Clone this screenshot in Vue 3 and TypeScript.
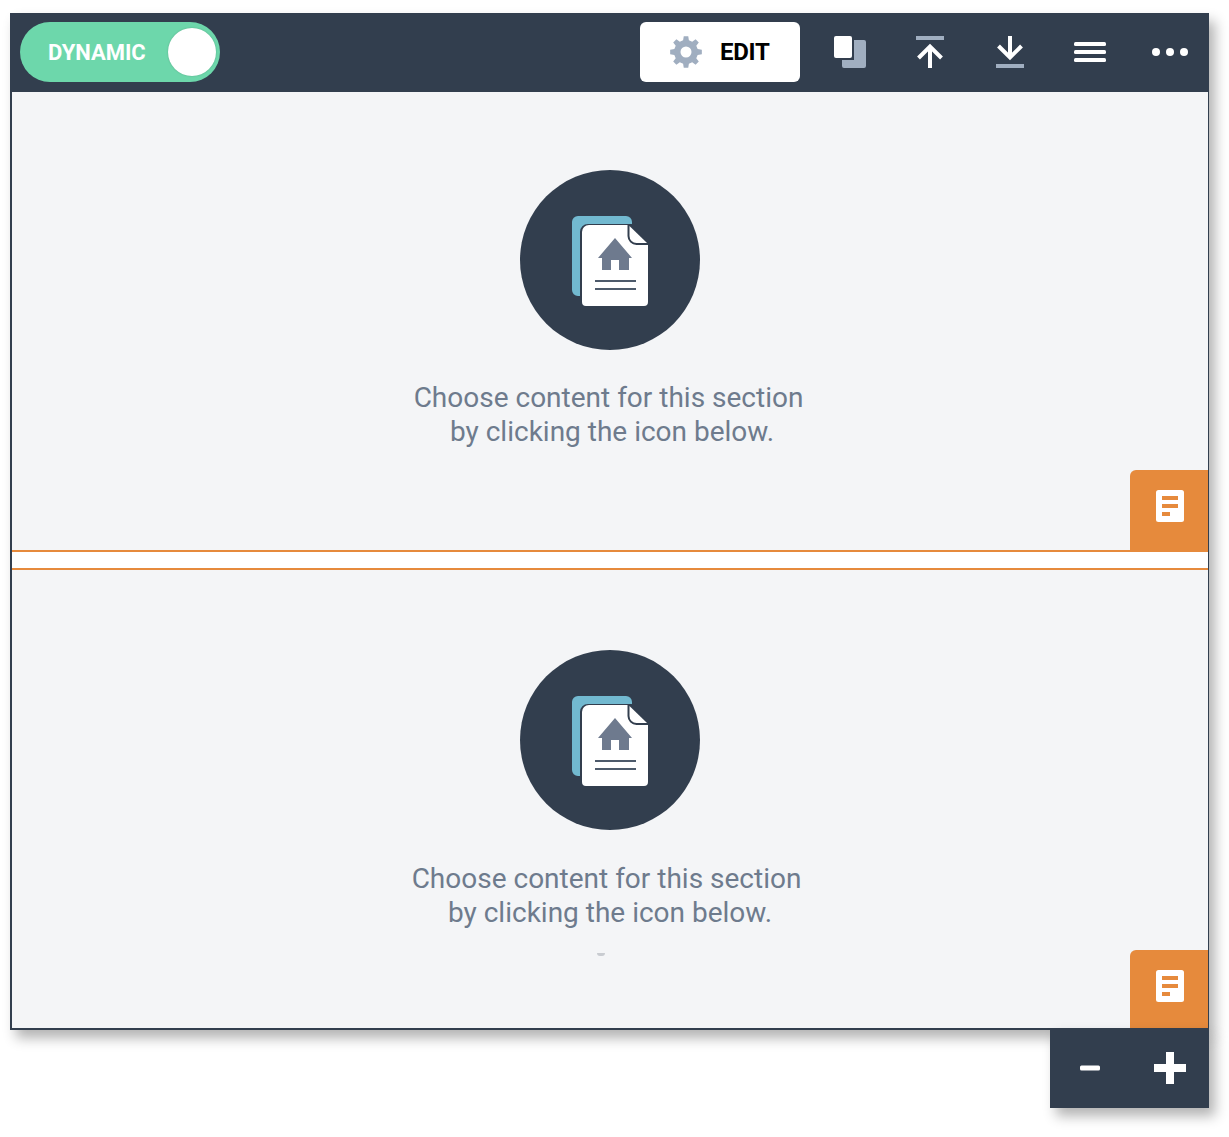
<script setup lang="ts">
function gearPath(): string {
  const teeth = 8;
  const outer = 16;
  const inner = 12;
  const pts: string[] = [];
  for (let i = 0; i < teeth; i++) {
    const a = (i * Math.PI * 2) / teeth - Math.PI / 2;
    const step = Math.PI / teeth;
    const list: [number, number][] = [
      [inner, a - step * 0.62],
      [outer, a - step * 0.36],
      [outer, a + step * 0.36],
      [inner, a + step * 0.62],
    ];
    for (const [r, t] of list) {
      pts.push(`${(16 + r * Math.cos(t)).toFixed(2)} ${(16 + r * Math.sin(t)).toFixed(2)}`);
    }
  }
  const hole = 'M21.5 16a5.5 5.5 0 1 0-11 0a5.5 5.5 0 1 0 11 0Z';
  return `M${pts.join('L')}Z${hole}`;
}
const gear = gearPath();
const sections = [
  { id: 'one', tab: 'tab-tall', mark: false },
  { id: 'two', tab: 'tab-short', mark: true },
];
</script>

<template>
  <div class="page">
    <div class="frame">
      <header class="header">
        <div class="toggle">
          <span class="toggle-label">DYNAMIC</span>
          <span class="knob"></span>
        </div>
        <div class="tools">
          <button class="edit" type="button">
            <svg class="gear" width="32" height="32" viewBox="0 0 32 32">
              <path :d="gear" fill="#a0aec0" fill-rule="evenodd" />
            </svg>
            <span>EDIT</span>
          </button>
          <button class="tool" type="button" aria-label="Copy">
            <svg width="32" height="32" viewBox="0 0 32 32">
              <path d="M20 4h10a2 2 0 0 1 2 2v24a2 2 0 0 1-2 2H10a2 2 0 0 1-2-2v-6h12z" fill="#a0aec0" />
              <rect x="0" y="0" width="18" height="22" rx="2" fill="#fff" />
            </svg>
          </button>
          <button class="tool" type="button" aria-label="Move up">
            <svg width="32" height="32" viewBox="0 0 32 32">
              <rect x="2" y="0" width="28" height="4" fill="#a0aec0" />
              <path d="M16 32V12M4.500 22L16 10.500 27.500 22" fill="none" stroke="#fff" stroke-width="4" />
            </svg>
          </button>
          <button class="tool" type="button" aria-label="Move down">
            <svg width="32" height="32" viewBox="0 0 32 32">
              <rect x="2" y="28" width="28" height="4" fill="#a0aec0" />
              <path d="M16 0v20M4.500 10L16 21.500 27.500 10" fill="none" stroke="#fff" stroke-width="4" />
            </svg>
          </button>
          <button class="tool" type="button" aria-label="Menu">
            <svg width="32" height="32" viewBox="0 0 32 32">
              <rect x="0" y="6" width="32" height="4" rx="1.500" fill="#fff" />
              <rect x="0" y="14" width="32" height="4" rx="1.500" fill="#fff" />
              <rect x="0" y="22" width="32" height="4" rx="1.500" fill="#fff" />
            </svg>
          </button>
          <button class="tool" type="button" aria-label="More">
            <svg width="38" height="32" viewBox="0 0 38 32">
              <circle cx="5" cy="16" r="4" fill="#fff" />
              <circle cx="19" cy="16" r="4" fill="#fff" />
              <circle cx="33" cy="16" r="4" fill="#fff" />
            </svg>
          </button>
        </div>
      </header>

      <div class="body">
        <template v-for="(s, i) in sections" :key="s.id">
          <div v-if="i === 1" class="divider"></div>
          <section class="section" :class="s.id">
            <svg class="badge" width="180" height="180" viewBox="520 170 180 180">
              <circle cx="610" cy="260" r="90" fill="#323e4e" />
              <path d="M578 216h48a6 6 0 0 1 6 6v2h-44a8 8 0 0 0-8 8v64h-2a6 6 0 0 1-6-6v-68a6 6 0 0 1 6-6Z" fill="#72b9d0" />
              <path d="M589 225h38.500v11a9 9 0 0 0 9 9h11.500v57a4 4 0 0 1-4 4h-58a4 4 0 0 1-4-4v-70a7 7 0 0 1 7-7Z" fill="#fff" />
              <path d="M629.500 226L647 243h-10.500a7 7 0 0 1-7-7Z" fill="#fff" />
              <path d="M615 238l17 20h-3v12h-10v-10h-8v10h-9v-12h-4Z" fill="#6e7a8e" />
              <rect x="595" y="280" width="41" height="2" fill="#4d5a6b" />
              <rect x="595" y="288" width="41" height="2" fill="#4d5a6b" />
            </svg>
            <p class="hint">Choose content for this section&nbsp;<br />by clicking the icon below.</p>
            <span v-if="s.mark" class="mark"></span>
            <div class="tab" :class="s.tab">
              <svg width="28" height="32" viewBox="0 0 28 32">
                <rect width="28" height="32" rx="2.500" fill="#fff" />
                <rect x="6" y="6" width="16" height="4" fill="#e68a3c" />
                <rect x="6" y="14" width="16" height="4" fill="#e68a3c" />
                <rect x="6" y="22" width="8" height="4" fill="#e68a3c" />
              </svg>
            </div>
          </section>
        </template>
      </div>
    </div>

    <div class="zoom">
      <button class="zoom-btn" type="button" aria-label="Zoom out">
        <svg width="20" height="6" viewBox="0 0 20 6"><rect width="20" height="5" y="0.500" rx="1.500" fill="#fff" /></svg>
      </button>
      <button class="zoom-btn" type="button" aria-label="Zoom in">
        <svg width="32" height="32" viewBox="0 0 32 32"><path d="M12 0h8v12h12v8H20v12h-8V20H0v-8h12Z" fill="#fff" /></svg>
      </button>
    </div>
  </div>
</template>

<style>
html,
body {
  margin: 0;
  background: #fff;
}
</style>

<style scoped>
.page {
  box-sizing: border-box;
  width: 1229px;
  height: 1137px;
  padding: 13px 20px 0 10px;
  overflow: hidden;
  font-family: Roboto, "Liberation Sans", sans-serif;
}
.frame {
  box-shadow: 6px 8px 12px rgba(0, 0, 0, 0.3);
}
.header {
  height: 79px;
  box-sizing: border-box;
  padding: 9px 0 0 10px;
  background: #323e4e;
  display: flex;
  justify-content: space-between;
  align-items: flex-start;
}
.toggle {
  box-sizing: border-box;
  width: 200px;
  height: 60px;
  border-radius: 30px;
  background: #6dd7ab;
  display: flex;
  align-items: center;
  justify-content: space-between;
  padding: 0 4px 0 28px;
}
.toggle-label {
  color: #fff;
  font-size: 22px;
  font-weight: 700;
  letter-spacing: -0.05px;
}
.knob {
  width: 48px;
  height: 48px;
  border-radius: 50%;
  background: #fff;
  box-shadow: 0 0 2px rgba(0, 0, 0, 0.2);
}
.tools {
  display: flex;
  align-items: center;
  margin-right: -1px;
}
.edit {
  width: 160px;
  height: 60px;
  margin-right: 10px;
  padding: 0 0 0 30px;
  box-sizing: border-box;
  border: 0;
  border-radius: 6px;
  background: #fff;
  display: flex;
  align-items: center;
  gap: 18px;
  font-family: inherit;
  font-size: 24px;
  font-weight: 700;
  letter-spacing: -0.3px;
  color: #000;
}
.tool {
  flex: none;
  width: 80px;
  height: 60px;
  padding: 0;
  border: 0;
  background: none;
  display: flex;
  align-items: center;
  justify-content: center;
}
.body {
  border-left: 2px solid #323e4e;
  border-right: 1px solid #323e4e;
  border-bottom: 2px solid #323e4e;
  background: #fff;
}
.section {
  position: relative;
  height: 458px;
  box-sizing: border-box;
  background: #f4f5f7;
  display: flex;
  flex-direction: column;
  align-items: center;
}
.one {
  padding-top: 78px;
}
.two {
  padding-top: 80px;
}
.badge {
  display: block;
  flex: none;
  margin-right: 1px;
}
.hint {
  margin: 31px 0 0;
  font-size: 28px;
  line-height: 34px;
  font-weight: 400;
  text-align: center;
  color: #6e7b8d;
}
.one .hint {
  padding-left: 4px;
}
.two .hint {
  margin-top: 32px;
}
.mark {
  width: 8px;
  height: 3px;
  margin: 23px 18px 0 0;
  border-radius: 0 0 4px 4px;
  background: #c9ccd1;
}
.tab {
  position: absolute;
  right: 0;
  bottom: 0;
  width: 78px;
  box-sizing: border-box;
  padding: 20px 0 0 2px;
  display: flex;
  justify-content: center;
  align-items: flex-start;
  background: #e68a3c;
  border-top-left-radius: 6px;
}
.tab-tall {
  height: 80px;
}
.tab-short {
  height: 78px;
}
.divider {
  height: 16px;
  border-top: 2px solid #e68a3c;
  border-bottom: 2px solid #e68a3c;
  background: #fff;
}
.zoom {
  position: relative;
  width: 159px;
  height: 80px;
  margin: -2px 0 0 auto;
  background: #323e4e;
  display: flex;
  box-shadow: 6px 8px 12px rgba(0, 0, 0, 0.3);
}
.zoom-btn {
  flex: none;
  width: 80px;
  padding: 0;
  border: 0;
  background: none;
  display: flex;
  align-items: center;
  justify-content: center;
}
</style>
